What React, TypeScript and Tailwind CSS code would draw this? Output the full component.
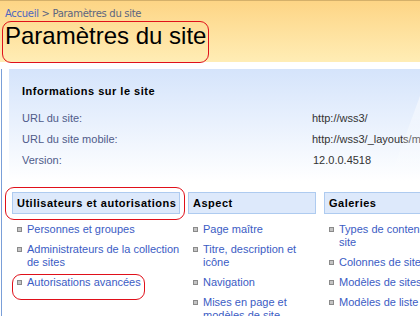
import React from "react";

const font = { fontFamily: '"Liberation Sans", Arial, sans-serif' };
const verdana = { fontFamily: '"DejaVu Sans", Verdana, sans-serif' };

function Bullet() {
  return <span className="mt-[4px] h-[5px] w-[5px] shrink-0 border border-[#8a8a8a] bg-[#c4c4c4]" />;
}

function Item({ children }: { children: React.ReactNode }) {
  return (
    <li className="flex gap-[5px] pl-[5px] text-[11px] leading-[13px] text-[#3b5cc4]">
      <Bullet />
      <span>{children}</span>
    </li>
  );
}

function Section({ title, width, items }: { title: string; width: string; items: string[] }) {
  return (
    <div className={width + " shrink-0"}>
      <div className="h-[22px] border border-[#aecbf0] bg-[#dde9fb] pl-[4px] text-[11px] font-bold leading-[20px] tracking-[0.5px] text-black">
        {title}
      </div>
      <ul className="mt-[9px] flex flex-col gap-[7px]">
        {items.map((t) => (
          <Item key={t}>{t}</Item>
        ))}
      </ul>
    </div>
  );
}

export default function App() {
  return (
    <div className="relative h-[316px] w-[420px] overflow-hidden bg-white" style={font}>
      <div className="w-[600px]">
        {/* Header */}
        <div className="h-[62px] border-t border-[#d4b06a] bg-gradient-to-b from-[#fdd585] to-[#ffedb5]">
          <div className="pl-[5px] pt-[6px] text-[10px] leading-[14px] tracking-[-0.3px]" style={verdana}>
            <span className="text-[#4f66c0]">Accueil</span>
            <span className="text-[#5c6580]"> &gt; Paramètres du site</span>
          </div>
          <div className="pl-[5px] pt-[1px] text-[24px] leading-[28px] text-black">Paramètres du site</div>
        </div>

        {/* Body */}
        <div className="ml-[1px] h-[260px] border-l border-[#7a9fd8]">
          <div className="relative ml-[7px] mt-[7px] h-[112px] bg-gradient-to-b from-[#d5e4fb] to-white pl-[13px] pt-[15px]">
            <div className="text-[11px] font-bold leading-[14px] tracking-[0.5px] text-black">Informations sur le site</div>
            <div className="mt-[10px] flex flex-col text-[11px] leading-[21px]">
              <div className="flex">
                <span className="w-[290px] text-[#4f5b8a]">URL du site:</span>
                <span className="text-[#333]">http://wss3/</span>
              </div>
              <div className="flex">
                <span className="w-[290px] text-[#4f5b8a]">URL du site mobile:</span>
                <span className="text-[#333]">http://wss3/_layouts/mobile/mbllists.aspx</span>
              </div>
              <div className="flex">
                <span className="w-[290px] text-[#4f5b8a]">Version:</span>
                <span className="pl-[1px] text-[#333]">12.0.0.4518</span>
              </div>
            </div>
          </div>

          <div className="ml-[10px] mt-[11px] flex gap-[8px]">
            <Section
              title="Utilisateurs et autorisations"
              width="w-[168px]"
              items={["Personnes et groupes", "Administrateurs de la collection de sites", "Autorisations avancées"]}
            />
            <Section
              title="Aspect"
              width="w-[128px]"
              items={["Page maître", "Titre, description et icône", "Navigation", "Mises en page et modèles de site"]}
            />
            <Section
              title="Galeries"
              width="w-[128px]"
              items={["Types de contenu de site", "Colonnes de site", "Modèles de sites", "Modèles de liste"]}
            />
          </div>
        </div>
      </div>

      {/* decorative glass shapes on panel right */}
      <div className="pointer-events-none absolute left-[404px] top-[96px] h-[88px] w-[28px] -skew-x-[20deg] bg-gradient-to-b from-white/50 to-white/0" />

      {/* red annotation outlines */}
      <div className="pointer-events-none absolute left-[2px] top-[21px] h-[42px] w-[207px] rounded-[9px] border border-[#e0101a]" />
      <div className="pointer-events-none absolute left-[5px] top-[187px] h-[33px] w-[180px] rounded-[9px] border border-[#e0101a]" />
      <div className="pointer-events-none absolute left-[12px] top-[274px] h-[26px] w-[133px] rounded-[9px] border border-[#e0101a]" />
    </div>
  );
}
